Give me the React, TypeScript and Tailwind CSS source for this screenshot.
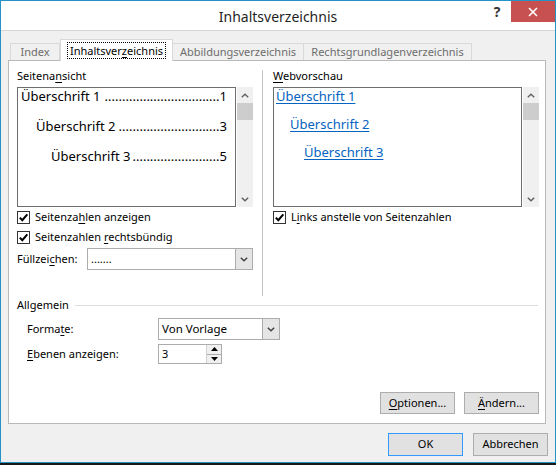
import React from "react"

const U = ({ children }: { children: React.ReactNode }) => (
    <span className="underline decoration-1 underline-offset-[2px]">{children}</span>
)

const Check = () => (
    <span className="w-[13px] h-[13px] border border-[#333333] bg-white flex items-center justify-center shrink-0">
        <svg width="11" height="11" viewBox="0 0 11 11">
            <path d="M1.8 5.6 L4.3 8.2 L9.3 2.3" fill="none" stroke="#000" strokeWidth="2" />
        </svg>
    </span>
)

const ChevUp = () => (
    <svg width="8" height="5" viewBox="0 0 8 5">
        <path d="M0.8 4.3 L4 1.2 L7.2 4.3" fill="none" stroke="#606060" strokeWidth="1.3" />
    </svg>
)

const ChevDown = ({ color = "#606060" }: { color?: string }) => (
    <svg width="8" height="5" viewBox="0 0 8 5">
        <path d="M0.8 0.7 L4 3.8 L7.2 0.7" fill="none" stroke={color} strokeWidth="1.4" />
    </svg>
)

const ScrollBar = () => (
    <div className="w-[16px] ml-px bg-[#f0f0f0] flex flex-col shrink-0">
        <div className="h-[16px] flex items-center justify-center"><ChevUp /></div>
        <div className="h-[17px] bg-[#cdcdcd]" />
        <div className="flex-1" />
        <div className="h-[16px] flex items-center justify-center"><ChevDown /></div>
    </div>
)

const Select = ({ value, className }: { value: string; className: string }) => (
    <div className={`flex border border-[#acacac] bg-white ${className}`}>
        <div className="flex-1 flex items-center pl-[3px] text-black">{value}</div>
        <div className="w-[17px] bg-[#e5e5e5] border-l border-[#acacac] flex items-center justify-center">
            <ChevDown color="#404040" />
        </div>
    </div>
)

const Button = ({ children, primary }: { children: React.ReactNode; primary?: boolean }) => (
    <div className={`w-[75px] flex items-center justify-center bg-[#e1e1e1] border text-black ${primary ? "border-[#3399ff]" : "border-[#adadad]"}`}>
        {children}
    </div>
)

// leader dots are counted so they fill the gap up to the page number
const TocRow = ({ title, page, indent, dots }: { title: string; page: string; indent: string; dots: number }) => (
    <div className={`flex justify-between leading-[17px] whitespace-nowrap ${indent}`}>
        <span>{title}</span>
        <span>{".".repeat(dots)}{page}</span>
    </div>
)

const App: React.FC = () => {
    return (
        <div className="w-[556px] h-[465px] bg-[#1a1a1a] font-['Segoe_UI','Noto_Sans',sans-serif] text-[11px] text-black">
            <div className="h-[463px] border border-[#2592c6] bg-[#f0f0f0] flex flex-col">
                {/* title bar */}
                <div className="h-[30px] bg-white border-b border-[#d5d5d5] grid grid-cols-[1fr_auto_1fr] shrink-0">
                    <div />
                    <div className="text-[14px] text-[#1f1f1f] flex items-center pt-[1px]">Inhaltsverzeichnis</div>
                    <div className="flex justify-end items-start">
                        <div className="w-[28px] h-[21px] flex items-center justify-center text-[14px] font-bold text-[#333]">?</div>
                        <div className="w-[44px] h-[21px] bg-[#c75050] flex items-center justify-center">
                            <svg width="10" height="10" viewBox="0 0 10 10">
                                <path d="M1 1 L9 9 M9 1 L1 9" stroke="#fff" strokeWidth="1.6" />
                            </svg>
                        </div>
                    </div>
                </div>

                {/* body */}
                <div className="flex-1 flex flex-col pt-[8px]">
                    {/* tabs */}
                    <div className="h-[21px] flex items-end pl-[9px]">
                        <div className="w-[50px] h-[17px] border border-b-0 border-[#d9d9d9] flex items-center justify-center text-[#6d6d6d]">Index</div>
                        <div className="w-[113px] h-[22px] -mb-px relative z-10 bg-white border border-b-0 border-[#d9d9d9] flex items-center justify-center">
                            <span className="border border-dotted border-black px-[2px] leading-[15px]">Inhaltsver<U>z</U>eichnis</span>
                        </div>
                        <div className="w-[131px] h-[17px] border border-b-0 border-l-0 border-[#d9d9d9] flex items-center justify-center text-[#6d6d6d]">Abbildungsverzeichnis</div>
                        <div className="w-[168px] h-[17px] border border-b-0 border-l-0 border-[#d9d9d9] flex items-center justify-center text-[#6d6d6d]">Rechtsgrundlagenverzeichnis</div>
                    </div>

                    {/* panel */}
                    <div className="ml-[7px] w-[538px] h-[364px] bg-white border border-[#b9b9b9] flex flex-col">
                        <div className="h-[228px] mt-[7px] flex pl-[8px] pr-[6px]">
                            {/* left column */}
                            <div className="w-[236px] shrink-0 flex flex-col">
                                <div className="h-[16px] leading-[16px]">Seitena<U>n</U>sicht</div>
                                <div className="mt-[3px] h-[120px] flex">
                                    <div className="flex-1 min-w-0 overflow-hidden border border-[#6e6e6e] pl-[3px] pr-[8px] text-[13px] flex flex-col gap-[13px]">
                                        <TocRow title="Überschrift 1" page="1" indent="" dots={33} />
                                        <TocRow title="Überschrift 2" page="3" indent="pl-[15px]" dots={29} />
                                        <TocRow title="Überschrift 3" page="5" indent="pl-[30px]" dots={25} />
                                    </div>
                                    <ScrollBar />
                                </div>
                                <div className="h-[20px] flex items-center gap-[5px]"><Check /><span>Seitenza<U>h</U>len anzeigen</span></div>
                                <div className="h-[20px] flex items-center gap-[5px]"><Check /><span>Seitenzahlen <U>r</U>echtsbündig</span></div>
                                <div className="mt-[1px] h-[22px] flex items-center">
                                    <span className="w-[70px]">Füllzei<U>c</U>hen:</span>
                                    <Select value="......." className="flex-1 h-[22px]" />
                                </div>
                            </div>

                            {/* divider */}
                            <div className="ml-[9px] mt-[2px] w-px bg-[#c4c4c4] shrink-0" />

                            {/* right column */}
                            <div className="ml-[10px] flex-1 min-w-0 flex flex-col">
                                <div className="h-[16px] leading-[16px]"><U>W</U>ebvorschau</div>
                                <div className="mt-[3px] h-[120px] flex">
                                    <div className="flex-1 min-w-0 border border-[#6e6e6e] pl-[2px] text-[13px] text-[#0563c1] flex flex-col gap-[12px] leading-[16px]">
                                        <span className="underline decoration-1 underline-offset-[2px]">Überschrift 1</span>
                                        <span className="pl-[14px]"><span className="underline decoration-1 underline-offset-[2px]">Überschrift 2</span></span>
                                        <span className="pl-[28px]"><span className="underline decoration-1 underline-offset-[2px]">Überschrift 3</span></span>
                                    </div>
                                    <ScrollBar />
                                </div>
                                <div className="h-[20px] flex items-center gap-[5px]"><Check /><span>L<U>i</U>nks anstelle von Seitenzahlen</span></div>
                            </div>
                        </div>

                        {/* Allgemein */}
                        <div className="h-[18px] flex items-center pl-[8px] pr-[7px]">
                            <span>Allgemein</span>
                            <div className="flex-1 ml-[6px] h-px bg-[#dcdcdc]" />
                        </div>
                        <div className="mt-[4px] h-[22px] flex items-center pl-[18px]">
                            <span className="w-[131px]">Forma<U>t</U>e:</span>
                            <Select value="Von Vorlage" className="w-[122px] h-[22px] text-[11.5px]" />
                        </div>
                        <div className="mt-[4px] h-[20px] flex items-center pl-[18px]">
                            <span className="w-[131px]"><U>E</U>benen anzeigen:</span>
                            <div className="w-[64px] h-[20px] border border-[#acacac] flex">
                                <div className="flex-1 flex items-center pl-[3px]">3</div>
                                <div className="w-[15px] flex flex-col bg-[#f0f0f0] border-l border-[#d0d0d0]">
                                    <div className="flex-1 flex items-center justify-center border-b border-[#acacac]">
                                        <svg width="7" height="4" viewBox="0 0 7 4"><path d="M0 4 L3.5 0 L7 4Z" fill="#000" /></svg>
                                    </div>
                                    <div className="flex-1 flex items-center justify-center">
                                        <svg width="7" height="4" viewBox="0 0 7 4"><path d="M0 0 L3.5 4 L7 0Z" fill="#000" /></svg>
                                    </div>
                                </div>
                            </div>
                        </div>
                        <div className="mt-[28px] h-[22px] flex justify-end gap-[9px] pr-[6px]">
                            <Button><U>O</U>ptionen...</Button>
                            <Button><U>Ä</U>ndern...</Button>
                        </div>
                    </div>

                    {/* dialog buttons */}
                    <div className="mt-[9px] h-[23px] flex justify-end gap-[10px] pr-[7px]">
                        <Button primary>OK</Button>
                        <Button>Abbrechen</Button>
                    </div>
                </div>
            </div>
        </div>
    )
}

export default App
